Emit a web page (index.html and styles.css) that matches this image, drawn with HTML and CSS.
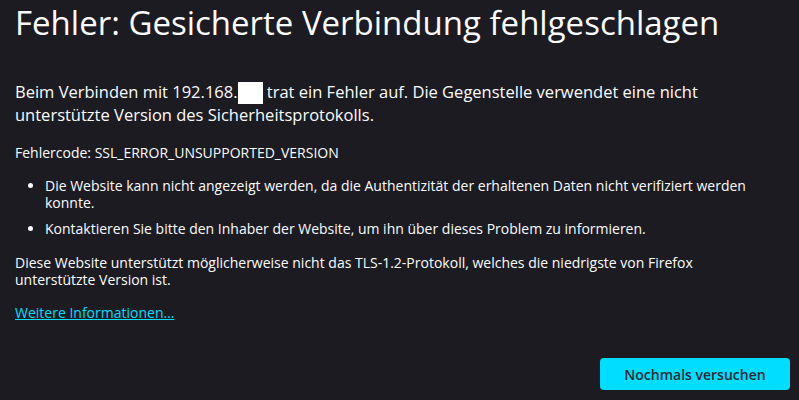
FILE: index.html
```html
<!DOCTYPE html>
<html lang="de">
<head>
  <meta charset="UTF-8" />
  <title>Fehler: Gesicherte Verbindung fehlgeschlagen</title>
  <link rel="stylesheet" href="styles.css">
</head>
<body>
  <div class="container">
    <h1 class="title">Fehler: Gesicherte Verbindung fehlgeschlagen</h1>

    <p class="intro">Beim Verbinden mit 192.168.<span class="redacted"></span> trat ein Fehler auf. Die Gegenstelle verwendet eine nicht unterstützte Version des Sicherheitsprotokolls.</p>

    <p class="small code">Fehlercode: SSL_ERROR_UNSUPPORTED_VERSION</p>

    <ul class="small list">
      <li>Die Website kann nicht angezeigt werden, da die Authentizität der erhaltenen Daten nicht verifiziert werden konnte.</li>
      <li>Kontaktieren Sie bitte den Inhaber der Website, um ihn über dieses Problem zu informieren.</li>
    </ul>

    <p class="small">Diese Website unterstützt möglicherweise nicht das TLS-1.2-Protokoll, welches die niedrigste von Firefox unterstützte Version ist.</p>

    <p class="small more"><a href="#">Weitere Informationen…</a></p>

    <div class="actions">
      <button>Nochmals versuchen</button>
    </div>
  </div>
</body>
</html>
```

FILE: styles.css
```css
body {
  margin: 0;
  background: #1c1b22;
  color: #fbfbfe;
  font-family: "Open Sans", sans-serif;
}
.container {
  padding: 0 9px 0 15px;
}
.title {
  font-size: 33px;
  font-weight: 500;
  margin: 1px 0 0;
  line-height: 44px;
}
.intro {
  font-size: 16.5px;
  line-height: 22px;
  margin: 36px 0 0;
  max-width: 760px;
}
.redacted {
  display: inline-block;
  width: 25px;
  height: 22px;
  background: #fff;
  vertical-align: -6px;
}
.small {
  font-size: 14px;
  line-height: 17px;
  margin: 17px 0 0;
  max-width: 750px;
}
.code {
  margin-top: 18px;
}
.list {
  padding-left: 30px;
  margin-top: 16px;
  max-width: 740px;
}
.list li + li {
  margin-top: 9px;
}
.more {
  margin-top: 16px;
}
a {
  color: #00ddff;
}
.actions {
  display: flex;
  justify-content: flex-end;
  margin-top: 37px;
}
button {
  background: #00ddff;
  color: #2b2a33;
  border: none;
  border-radius: 4px;
  font-family: inherit;
  font-size: 14px;
  font-weight: 600;
  width: 190px;
  height: 32px;
}
```
